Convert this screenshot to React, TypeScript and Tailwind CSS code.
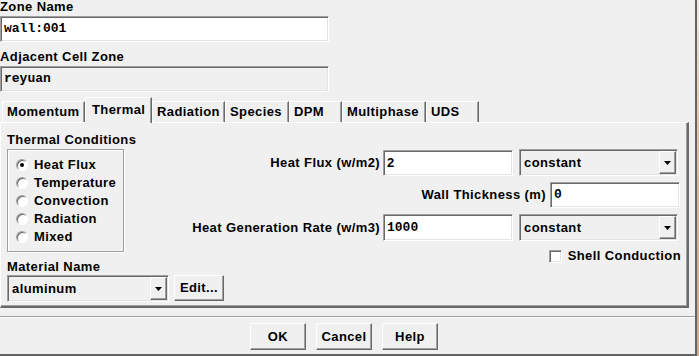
const sunken =
  "border border-t-[#a0a0a0] border-l-[#a0a0a0] border-r-white border-b-white shadow-[inset_1px_1px_0_#696969,inset_-1px_-1px_0_#e3e3e3]";
const raised =
  "border border-t-white border-l-white border-r-[#696969] border-b-[#696969] shadow-[inset_-1px_-1px_0_#a0a0a0]";
const mono = "font-['Liberation_Mono',monospace] tracking-normal";

const tabs = [
  { name: "Momentum", w: "w-[83px]" },
  { name: "Thermal", w: "w-[67px]", active: true },
  { name: "Radiation", w: "w-[73px]" },
  { name: "Species", w: "w-[64px]" },
  { name: "DPM", w: "w-[53px]" },
  { name: "Multiphase", w: "w-[84px]" },
  { name: "UDS", w: "w-[53px]" },
];

const conditions = ["Heat Flux", "Temperature", "Convection", "Radiation", "Mixed"];

function Arrow() {
  return (
    <svg width="7" height="4" viewBox="0 0 7 4">
      <polygon points="0,0 7,0 3.5,4" fill="#000" />
    </svg>
  );
}

function Combo({ value, width }: { value: string; width: string }) {
  return (
    <div className={`flex h-[27px] ${width} items-stretch bg-[#f0f0f0] ${sunken} p-[1px]`}>
      <div className="flex flex-1 items-center pl-[3px]">{value}</div>
      <div className={`flex w-[17px] items-center justify-center bg-[#f0f0f0] ${raised}`}>
        <Arrow />
      </div>
    </div>
  );
}

function Radio({ checked }: { checked?: boolean }) {
  return (
    <div className="flex h-[12px] w-[12px] items-center justify-center rounded-full border border-t-[#a0a0a0] border-l-[#a0a0a0] border-r-white border-b-white bg-white shadow-[inset_1px_1px_0_#696969]">
      {checked && <div className="h-[4px] w-[4px] rounded-full bg-black" />}
    </div>
  );
}

export default function App() {
  return (
    <div className="flex h-[356px] w-[699px] overflow-hidden bg-[#f0f0f0] font-['Liberation_Sans',Arial,sans-serif] text-[13px] leading-[14px] font-bold tracking-[0.4px] whitespace-nowrap text-black">
      <div className="flex w-[697px] flex-col border-r-2 border-b-2 border-[#646464]">
        <div className="h-[16px]">Zone Name</div>
        <div className={`flex h-[26px] w-[329px] items-center bg-white pl-[3px] ${mono} ${sunken}`}>wall:001</div>
        <div className="mt-[8px] h-[16px]">Adjacent Cell Zone</div>
        <div className={`flex h-[26px] w-[329px] items-center bg-[#f0f0f0] pl-[3px] ${mono} ${sunken}`}>reyuan</div>

        {/* tab strip */}
        <div className="relative z-10 mt-[5px] flex h-[25px] items-end pl-[2px]">
          {tabs.map((t) =>
            t.active ? (
              <div
                key={t.name}
                className={`-mb-px flex h-[26px] ${t.w} items-center border-t border-l border-white border-r border-r-[#696969] bg-[#f0f0f0] pb-[2px] pl-[6px] shadow-[inset_-1px_0_0_#a0a0a0]`}
              >
                {t.name}
              </div>
            ) : (
              <div
                key={t.name}
                className={`flex h-[21px] ${t.w} items-center border-t border-l border-white border-r border-r-[#696969] pl-[4px] shadow-[inset_-1px_0_0_#a0a0a0]`}
              >
                {t.name}
              </div>
            )
          )}
        </div>

        {/* tab panel */}
        <div className="flex h-[186px] w-[689px] border-t border-l border-white border-r-2 border-b-2 border-r-[#696969] border-b-[#696969] shadow-[inset_-1px_-1px_0_#a0a0a0]">
          <div className="ml-[6px] flex w-[217px] shrink-0 flex-col pt-[10px]">
            <div className="h-[14px]">Thermal Conditions</div>
            <div className="mt-[2px] h-[103px] w-[117px] border border-[#a0a0a0] pt-[6px] pl-[8px] shadow-[inset_1px_1px_0_#fff,1px_1px_0_#fff]">
              {conditions.map((c, i) => (
                <div key={c} className="flex h-[18px] items-center">
                  <Radio checked={i === 0} />
                  <span className="ml-[6px]">{c}</span>
                </div>
              ))}
            </div>
            <div className="mt-[8px] h-[14px]">Material Name</div>
            <div className="mt-[1px] flex items-start">
              <Combo value="aluminum" width="w-[162px]" />
              <div className={`ml-[5px] flex h-[26px] w-[50px] items-center justify-center ${raised}`}>Edit...</div>
            </div>
          </div>

          <div className="flex min-w-0 flex-1 flex-col items-end pt-[26px]">
            <div className="mr-[9px] flex shrink-0 items-center">
              <span>Heat Flux (w/m2)</span>
              <div className={`ml-[3px] flex h-[26px] w-[130px] items-center bg-white pl-[3px] ${sunken}`}>2</div>
              <div className="ml-[6px]">
                <Combo value="constant" width="w-[159px]" />
              </div>
            </div>
            <div className="mt-[6px] mr-[7px] flex shrink-0 items-center">
              <span>Wall Thickness (m)</span>
              <div className={`ml-[4px] flex h-[26px] w-[130px] items-center bg-white pl-[3px] ${mono} ${sunken}`}>0</div>
            </div>
            <div className="mt-[6px] mr-[9px] flex shrink-0 items-center">
              <span>Heat Generation Rate (w/m3)</span>
              <div className={`ml-[3px] flex h-[27px] w-[130px] items-center bg-white pl-[3px] ${mono} ${sunken}`}>1000</div>
              <div className="ml-[6px]">
                <Combo value="constant" width="w-[159px]" />
              </div>
            </div>
            <div className="mt-[8px] mr-[6px] flex shrink-0 items-center">
              <div className={`h-[13px] w-[13px] bg-white ${sunken}`} />
              <span className="ml-[6px]">Shell Conduction</span>
            </div>
          </div>
        </div>

        <div className="mt-[8px] h-[2px] border-t border-[#a0a0a0] border-b border-b-white" />

        <div className="mt-[5px] flex gap-[10px] pl-[250px]">
          {["OK", "Cancel", "Help"].map((b) => (
            <div key={b} className={`flex h-[27px] w-[56px] items-center justify-center ${raised}`}>
              {b}
            </div>
          ))}
        </div>
      </div>
      <div className="w-[2px] bg-gradient-to-b from-[#f4e8dc] via-[#deb998] to-[#d6ad8a]" />
    </div>
  );
}
